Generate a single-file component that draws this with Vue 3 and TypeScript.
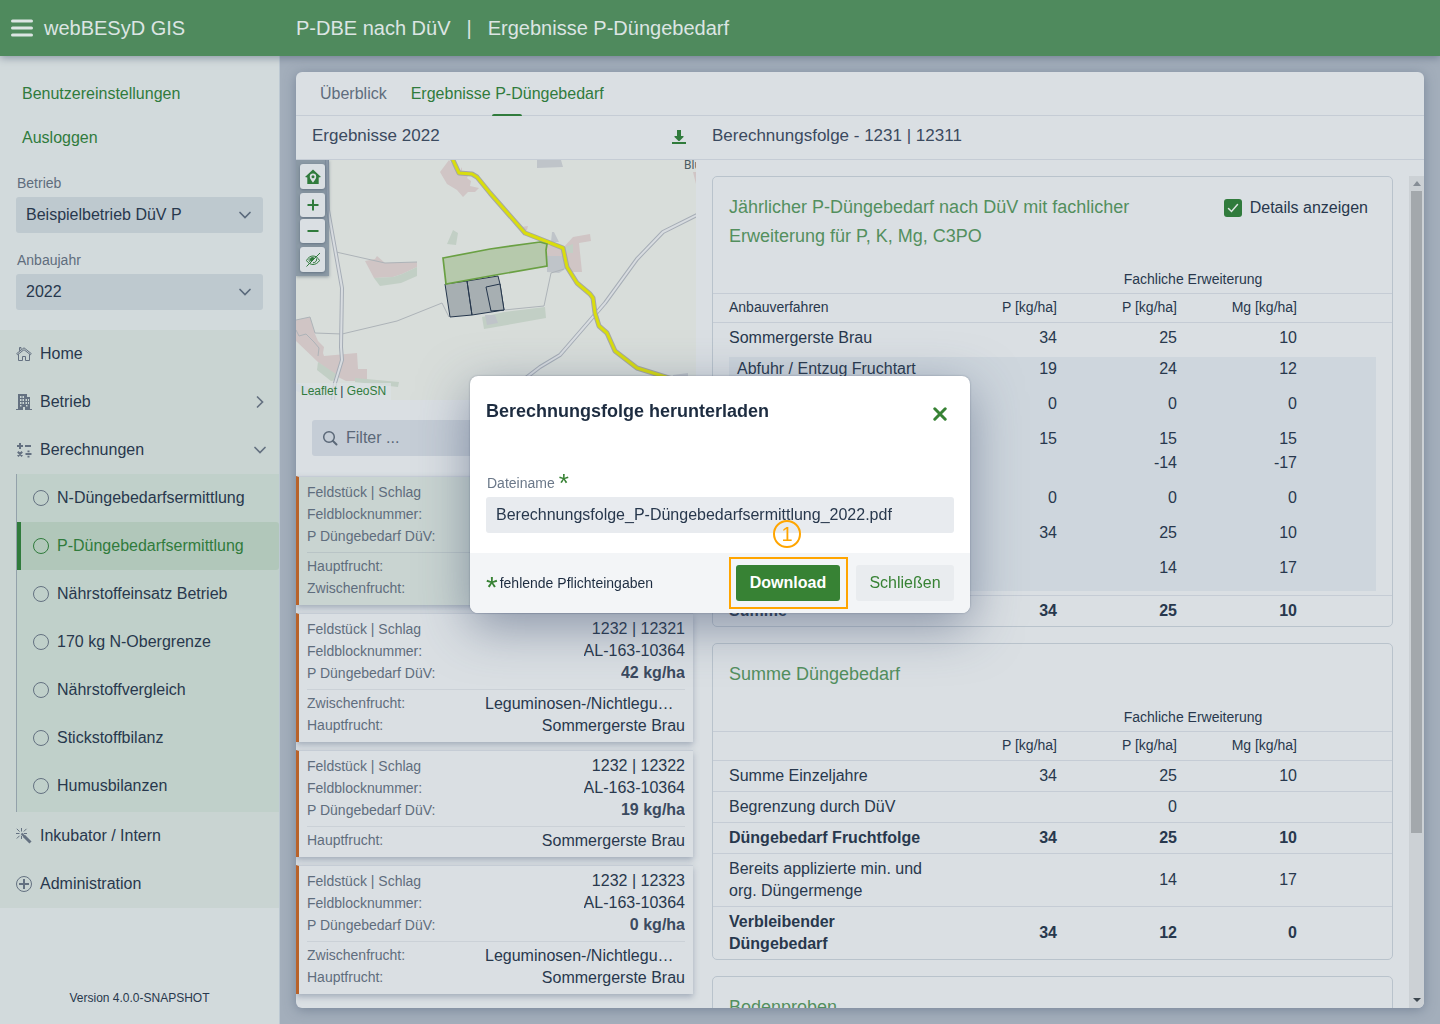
<script setup lang="ts">
import { ref } from 'vue'

interface MenuEntry { label: string; icon: string; chevron?: string }
interface Row { label: string; values: string[]; bold?: boolean }
interface Plot { plot: string; block: string; demand: string; active?: boolean; crops: { label: string; name: string }[] }

const farm = ref('Beispielbetrieb DüV P')
const year = ref('2022')
const showDetails = ref(true)
const filter = ref('')
const fileName = ref('Berechnungsfolge_P-Düngebedarfsermittlung_2022.pdf')

const topMenu: MenuEntry[] = [
  { label: 'Home', icon: 'home' },
  { label: 'Betrieb', icon: 'building', chevron: 'right' },
  { label: 'Berechnungen', icon: 'calc', chevron: 'down' },
]
const subMenu: string[] = [
  'N-Düngebedarfsermittlung',
  'P-Düngebedarfsermittlung',
  'Nährstoffeinsatz Betrieb',
  '170 kg N-Obergrenze',
  'Nährstoffvergleich',
  'Stickstoffbilanz',
  'Humusbilanzen',
]
const activeSub = 'P-Düngebedarfsermittlung'

const legume = { label: 'Zwischenfrucht:', name: 'Leguminosen-/Nichtleguminosen' }
const barley = { label: 'Hauptfrucht:', name: 'Sommergerste Brau' }
const plots: Plot[] = [
  { plot: '', block: '', demand: '', active: true, crops: [{ label: 'Hauptfrucht:', name: '' }, { label: 'Zwischenfrucht:', name: '' }] },
  { plot: '1232 | 12321', block: 'AL-163-10364', demand: '42 kg/ha', crops: [legume, barley] },
  { plot: '1232 | 12322', block: 'AL-163-10364', demand: '19 kg/ha', crops: [barley] },
  { plot: '1232 | 12323', block: 'AL-163-10364', demand: '0 kg/ha', crops: [legume, barley] },
]

const details: (Row & { tight?: boolean })[] = [
  { label: 'Abfuhr / Entzug Fruchtart', values: ['19', '24', '12'] },
  { label: '', values: ['0', '0', '0'] },
  { label: '', values: ['15', '15', '15'], tight: true },
  { label: '', values: ['', '-14', '-17'] },
  { label: '', values: ['0', '0', '0'] },
  { label: '', values: ['34', '25', '10'] },
  { label: '', values: ['', '14', '17'] },
]
const sums: Row[] = [
  { label: 'Summe Einzeljahre', values: ['34', '25', '10'] },
  { label: 'Begrenzung durch DüV', values: ['', '0', ''] },
  { label: 'Düngebedarf Fruchtfolge', values: ['34', '25', '10'], bold: true },
  { label: 'Bereits applizierte min. und org. Düngermenge', values: ['', '14', '17'] },
  { label: 'Verbleibender Düngebedarf', values: ['34', '12', '0'], bold: true },
]
</script>

<template>
  <div class="app">
    <header class="topbar">
      <div class="brand">
        <button class="menu-btn" type="button" aria-label="Menü">
          <svg width="22" height="18" viewBox="0 0 22 18"><path d="M1.5 2h19M1.5 9h19M1.5 16h19" stroke="currentColor" stroke-width="3" stroke-linecap="round" /></svg>
        </button>
        <span>webBESyD GIS</span>
      </div>
      <h1><span>P-DBE nach DüV</span><span>|</span><span>Ergebnisse P-Düngebedarf</span></h1>
    </header>

    <div class="body">
      <aside class="sidebar">
        <nav class="account">
          <a href="#">Benutzereinstellungen</a>
          <a href="#">Ausloggen</a>
        </nav>
        <div class="field">
          <label for="farm">Betrieb</label>
          <div class="select">
            <select id="farm" v-model="farm"><option>Beispielbetrieb DüV P</option></select>
            <svg width="14" height="8" viewBox="0 0 14 8"><path d="M2 1.500 7 6.500l5-5" fill="none" stroke="currentColor" stroke-width="1.700" stroke-linecap="round" /></svg>
          </div>
        </div>
        <div class="field">
          <label for="year">Anbaujahr</label>
          <div class="select">
            <select id="year" v-model="year"><option>2022</option></select>
            <svg width="14" height="8" viewBox="0 0 14 8"><path d="M2 1.500 7 6.500l5-5" fill="none" stroke="currentColor" stroke-width="1.700" stroke-linecap="round" /></svg>
          </div>
        </div>

        <nav class="menu">
          <a v-for="item in topMenu" :key="item.label" href="#" class="item">
            <svg v-if="item.icon === 'home'" width="16" height="16" viewBox="0 0 16 16" fill="none" stroke="currentColor">
              <path d="M.7 7.600 8 1.800l7.300 5.800-.9 1.100L8 3.700 1.600 8.700z" />
              <path d="M3.500 4.800V1.500h1.500v2M2.500 8.200v6.300h4v-4h3v4h4V8.200" />
            </svg>
            <svg v-else-if="item.icon === 'building'" width="16" height="16" viewBox="0 0 16 16">
              <path fill="currentColor" fill-rule="evenodd" d="M2 0h9v3h3v12h2v1H9v-3H7v3H0v-1h2zM4 2v2h1.500V2zM6.500 2v2H8V2zM4 5v2h1.500V5zM6.500 5v2H8V5zM4 8v2h1.500V8zM6.500 8v2H8V8zM9.500 5v2H11V5zM9.500 8v2H11V8zM12 5v2h1V5zM12 8v2h1V8zM4 11v1.500h1.500V11zM10 11v1.500h1.500V11z" />
            </svg>
            <svg v-else width="16" height="16" viewBox="0 0 16 16">
              <path d="M1 4h6M4 1v6M9 4h6M9.500 12h6M1.800 9.800l4.400 4.400M6.200 9.800l-4.400 4.400" stroke="currentColor" stroke-width="2" />
              <path d="M11.500 8.500h2v1.800h-2zM11.500 13.700h2v1.800h-2z" fill="currentColor" />
            </svg>
            <span>{{ item.label }}</span>
            <svg v-if="item.chevron === 'right'" class="chev" width="12" height="14" viewBox="0 0 12 14"><path d="M3.500 2 8.500 7l-5 5" fill="none" stroke="currentColor" stroke-width="1.700" stroke-linecap="round" /></svg>
            <svg v-if="item.chevron === 'down'" class="chev" width="12" height="8" viewBox="0 0 12 8"><path d="M1 1.500l5 5 5-5" fill="none" stroke="currentColor" stroke-width="1.700" stroke-linecap="round" /></svg>
          </a>
          <div class="submenu">
            <a v-for="label in subMenu" :key="label" href="#" :class="['sub', { active: label === activeSub }]">
              <svg width="16" height="16" viewBox="0 0 16 16"><circle cx="8" cy="8" r="7.500" fill="none" stroke="currentColor" /></svg>
              <span>{{ label }}</span>
            </a>
          </div>
          <a href="#" class="item">
            <svg width="16" height="16" viewBox="0 0 16 16" stroke="currentColor">
              <path d="M5.500 0v3.500M0 5.500h3.500M.8.8l2.800 2.800M10.500.8 7.800 3.500M.8 10.500l2.800-2.800M7.800 5.500H11M5.500 7.800V11" />
              <path d="M5.500 5.500 9 9" stroke-width="2" />
              <path d="M8 8l6.500 6.500" stroke-width="3" />
            </svg>
            <span>Inkubator / Intern</span>
          </a>
          <a href="#" class="item">
            <svg width="16" height="16" viewBox="0 0 16 16" fill="none" stroke="currentColor">
              <circle cx="8" cy="8" r="7.500" /><path d="M8 3v10M3 8h10" stroke-width="2" />
            </svg>
            <span>Administration</span>
          </a>
        </nav>
        <p class="version">Version 4.0.0-SNAPSHOT</p>
      </aside>

      <main class="content">
        <section class="panel">
          <nav class="tabs">
            <a href="#">Überblick</a>
            <a href="#" class="selected">Ergebnisse P-Düngebedarf</a>
          </nav>
          <div class="heads">
            <div class="head-left">
              <h2>Ergebnisse 2022</h2>
              <button type="button" aria-label="Herunterladen">
                <svg width="14" height="14" viewBox="0 0 14 14"><path d="M5 0h4v6h2.500v1L7.500 11h-1L2.500 7V6H5zM0 12h14v2H0z" fill="currentColor" /></svg>
              </button>
            </div>
            <h2>Berechnungsfolge - 1231 | 12311</h2>
          </div>

          <div class="columns">
            <div class="left">
              <div class="map">
                <svg class="chart" viewBox="0 0 400 240" preserveAspectRatio="xMinYMin slice">
                  <rect width="400" height="240" fill="#d8ddda" />
                  <g fill="#d0c5c5">
                    <path d="M153 0 163 13l3-6v6h7l-2 5 4 3-1 5 9 2-4 4-7 0-5 5-6-7-10-6-7-12z" />
                    <path d="M69 101l10-2 2-3 8 7 32-1v5l-15 7-9 3-19 1z" />
                    <path d="M0 160l14-3 5 17 3 7 6 6-1 6 1 3 33-3 1 16h9v12H50l-10-5-18-14L0 181z" />
                    <path d="M225 67l7-1-1 4h-6zM251 85l16 3 10-11 17-3 1 7-12 2 3 29h-14l-3-16h-18zM397 12h3v12z" />
                  </g>
                  <g fill="#c2cfc5">
                    <path d="M78 118l19-1 9-3 15-7v9l-16 7-21 3z" />
                    <path d="M157 70l5 3-2 12-9-1zM22 202l18 12 1 6-6 1-14-11zM59 218l44 4-1 5-43-5z" />
                    <path d="M186 157l22-5 41-5 1 11-56 10-6 1zM269 87l8-3v9h-6z" />
                  </g>
                  <g fill="#bfc4c9">
                    <path d="M241 0h24l2 7-26 1zM256 72h2l5 10h-8zM251 96h17l3 12-8 5-12-1z" />
                    <path d="M189 155h10l3 8-11 2zM377 215l15-2v8h-15z" />
                  </g>
                  <path d="M0 223l15 5 27 12H23L0 231z" fill="#c7cfdc" />
                  <path d="M40 92l49 11 32-1M19 173l27 1 55-13 45-18 7 14M208 150l40-4 7-33 13-4M0 160l14-3 5 16M0 170l3 6 7-2 8 8 5 6-1 8" fill="none" stroke="#adb3b8" />
                  <g fill="none" stroke-linejoin="round">
                    <path d="M31 0l1 50 14 78-1 59 1 13-7 23-2 17M401 55l-34 17-26 27-32 44-45 52-20 12-30 23" stroke="#a6adb6" stroke-width="4" />
                    <path d="M31 0l1 50 14 78-1 59 1 13-7 23-2 17M401 55l-34 17-26 27-32 44-45 52-20 12-30 23" stroke="#d8dce0" stroke-width="2" />
                    <path d="M156-2l7 15 13 1 5 3 13 16 35 40 38 15 4 19 10 16 13 11 3 4 2 15 4 13 8 7 8 18 22 17 35 11" stroke="#a5a7a5" stroke-width="5" />
                    <path d="M156-2l7 15 13 1 5 3 13 16 35 40 38 15 4 19 10 16 13 11 3 4 2 15 4 13 8 7 8 18 22 17 35 11" stroke="#d9dd0d" stroke-width="3" />
                  </g>
                  <g fill="#a7afb2" stroke="#25364c" stroke-linejoin="round">
                    <path d="M149 124l22-3 5 34-22 2zM171 121l31-5 2 8 4 26-32 5z" />
                    <path d="M204 124l-14 3 5 24 13-1z" />
                  </g>
                  <path d="M147 98l47-9 50-7 7 2-1 6 1 16-57 10-44 8z" fill="#b6c9ac" stroke="#6aa043" stroke-width="1.700" />
                  <text x="388" y="9" font-size="12" fill="#4b5c62" font-family="Roboto, sans-serif">Blu</text>
                </svg>
                <div class="controls">
                  <button type="button" aria-label="Zum Betrieb">
                    <svg width="16" height="16" viewBox="0 0 16 16"><path fill="currentColor" fill-rule="evenodd" d="M8 .5 16 8l-2.300.5V15H2.300V8.500L0 8zM8 4.500a3.200 3.200 0 0 0-3.200 3.200C4.800 10 8 13.500 8 13.500s3.200-3.500 3.200-5.800A3.200 3.200 0 0 0 8 4.500zm0 1.700a1.500 1.500 0 1 1 0 3 1.500 1.500 0 0 1 0-3z" /></svg>
                  </button>
                  <button type="button" aria-label="Vergrößern"><svg width="12" height="12" viewBox="0 0 12 12"><path d="M6 .5v11M.5 6h11" stroke="currentColor" stroke-width="2" /></svg></button>
                  <button type="button" aria-label="Verkleinern"><svg width="12" height="12" viewBox="0 0 12 12"><path d="M.5 6h11" stroke="currentColor" stroke-width="2" /></svg></button>
                  <button type="button" aria-label="Ausblenden">
                    <svg width="16" height="16" viewBox="0 0 16 16" fill="none" stroke="currentColor">
                      <path d="M1.500 8.500C3 5.500 5.500 4 8 4s5 1.500 6.500 4.500c-1.500 2.500-4 4-6.500 4s-5-1.500-6.500-4zM15 1 1.500 14.500" />
                      <path d="M8 5.200A2.500 2.500 0 0 0 6 9.700L10 6A2.500 2.500 0 0 0 8 5.200z" fill="currentColor" stroke="none" />
                      <path d="M4.500 6.500c-.8 1.300-.5 3 1 4M11.500 6.500c.8 2-1 4.300-3.500 4.300" />
                    </svg>
                  </button>
                </div>
                <p class="attribution"><a href="#">Leaflet</a> | <a href="#">GeoSN</a></p>
              </div>

              <div class="filter">
                <svg width="16" height="16" viewBox="0 0 16 16" fill="none" stroke="currentColor"><circle cx="7" cy="7" r="5.300" stroke-width="1.500" /><path d="M11 11l3.500 3.500" stroke-width="2" stroke-linecap="round" /></svg>
                <input v-model="filter" type="text" placeholder="Filter ..." aria-label="Filter" />
              </div>

              <ul class="plots">
                <li v-for="(p, i) in plots" :key="i" :class="{ active: p.active }">
                  <dl>
                    <div><dt>Feldstück | Schlag</dt><dd>{{ p.plot }}</dd></div>
                    <div><dt>Feldblocknummer:</dt><dd>{{ p.block }}</dd></div>
                    <div><dt>P Düngebedarf DüV:</dt><dd class="strong">{{ p.demand }}</dd></div>
                  </dl>
                  <dl class="crops">
                    <div v-for="c in p.crops" :key="c.label"><dt>{{ c.label }}</dt><dd>{{ c.name }}</dd></div>
                  </dl>
                </li>
              </ul>
            </div>

            <div class="right">
              <div class="scroll">
                <article class="card">
                  <div class="card-head">
                    <h3>Jährlicher P-Düngebedarf nach DüV mit fachlicher Erweiterung für P, K, Mg, C3PO</h3>
                    <label class="check">
                      <span class="box">
                        <input v-model="showDetails" type="checkbox" />
                        <svg width="18" height="18" viewBox="0 0 18 18"><path d="M4.500 9.500l3 3 6-7" fill="none" stroke="#dde5e2" stroke-width="1.500" stroke-linecap="round" /></svg>
                      </span>
                      Details anzeigen
                    </label>
                  </div>
                  <table>
                    <colgroup><col class="c-label" /><col class="c-num" /><col class="c-num" /><col class="c-num" /><col /></colgroup>
                    <thead>
                      <tr class="groups"><td colspan="2"></td><th colspan="2">Fachliche Erweiterung</th><td></td></tr>
                      <tr><th>Anbauverfahren</th><th>P [kg/ha]</th><th>P [kg/ha]</th><th>Mg [kg/ha]</th><td></td></tr>
                    </thead>
                    <tbody>
                      <tr class="lead"><td>Sommergerste Brau</td><td>34</td><td>25</td><td>10</td><td></td></tr>
                    </tbody>
                    <tbody v-if="showDetails" class="details">
                      <tr v-for="(r, i) in details" :key="i" :class="{ tight: r.tight }">
                        <td>{{ r.label }}</td><td v-for="(v, j) in r.values" :key="j">{{ v }}</td><td></td>
                      </tr>
                    </tbody>
                    <tbody>
                      <tr class="gap"><td colspan="5"></td></tr>
                      <tr class="bold"><td>Summe</td><td>34</td><td>25</td><td>10</td><td></td></tr>
                    </tbody>
                  </table>
                </article>

                <article class="card">
                  <div class="card-head"><h3>Summe Düngebedarf</h3></div>
                  <table>
                    <colgroup><col class="c-label" /><col class="c-num" /><col class="c-num" /><col class="c-num" /><col /></colgroup>
                    <thead>
                      <tr class="groups"><td colspan="2"></td><th colspan="2">Fachliche Erweiterung</th><td></td></tr>
                      <tr><td></td><th>P [kg/ha]</th><th>P [kg/ha]</th><th>Mg [kg/ha]</th><td></td></tr>
                    </thead>
                    <tbody>
                      <tr v-for="r in sums" :key="r.label" :class="{ bold: r.bold }">
                        <td>{{ r.label }}</td><td v-for="(v, j) in r.values" :key="j">{{ v }}</td><td></td>
                      </tr>
                    </tbody>
                  </table>
                </article>

                <article class="card">
                  <div class="card-head"><h3>Bodenproben</h3></div>
                </article>
              </div>
              <div class="scrollbar" aria-hidden="true">
                <svg width="15" height="15" viewBox="0 0 15 15"><path d="M4 10h8L8 5z" fill="#868e96" /></svg>
                <div class="track"><div class="thumb"></div></div>
                <svg width="15" height="15" viewBox="0 0 15 15"><path d="M4 5h8l-4 4z" fill="#3d474f" /></svg>
              </div>
            </div>
          </div>
        </section>
      </main>
    </div>

    <div class="overlay">
      <form class="dialog" role="dialog" aria-labelledby="dlg-title" @submit.prevent>
        <div class="dialog-head">
          <h2 id="dlg-title">Berechnungsfolge herunterladen</h2>
          <button type="button" aria-label="Dialog schließen">
            <svg width="14" height="14" viewBox="0 0 14 14"><path d="M1.800 1.800l10.400 10.400M12.200 1.800 1.800 12.200" stroke="currentColor" stroke-width="3" stroke-linecap="round" /></svg>
          </button>
        </div>
        <div class="dialog-body">
          <label for="file">Dateiname <span class="star">*</span></label>
          <input id="file" v-model="fileName" type="text" required />
        </div>
        <div class="dialog-foot">
          <p><span class="star">*</span>fehlende Pflichteingaben</p>
          <div class="marked">
            <button type="submit" class="primary">Download</button>
            <span class="frame"></span>
            <span class="step">1</span>
          </div>
          <button type="button" class="secondary">Schließen</button>
        </div>
      </form>
    </div>
  </div>
</template>

<style>
body { margin: 0; }
</style>

<style scoped>
* { box-sizing: border-box; }
.app {
  --green: #307b3c;
  --text: #28384d;
  --muted: #5f6d7d;
  --line: #c5ccd5;
  height: 100vh;
  display: flex;
  flex-direction: column;
  overflow: hidden;
  font: 16px/22px "Liberation Sans", Arial, sans-serif;
  color: var(--text);
  background: #a3aebb;
}
h1, h2, h3, p, ul, dl, dd { margin: 0; padding: 0; font-weight: 400; list-style: none; }
a { color: var(--green); text-decoration: none; }
button { border: 0; padding: 0; background: none; font: inherit; color: var(--green); display: flex; align-items: center; justify-content: center; cursor: pointer; }
svg { flex: none; display: block; }

.topbar { flex: none; height: 56px; display: flex; align-items: center; background: #4f8a5d; color: #dce5e3; font-size: 20px; z-index: 2; box-shadow: 0 2px 8px rgba(70, 85, 110, .5); }
.brand { width: 296px; padding-left: 11px; display: flex; align-items: center; gap: 11px; }
.menu-btn { color: inherit; }
h1 { display: flex; gap: 16px; font-size: 20px; }

.body { flex: 1; display: flex; min-height: 0; }
.sidebar { flex: none; width: 280px; padding-top: 16px; display: flex; flex-direction: column; background: #d2dadc; border-right: 1px solid #bcc8d2; }
.account { display: flex; flex-direction: column; padding: 0 22px; margin-bottom: 12px; }
.account a { line-height: 44px; }
.field { padding: 0 16px; margin-bottom: 16px; }
.field label { display: block; padding: 1px 1px 4px; font-size: 14px; line-height: 20px; color: var(--muted); }
.field + .field { margin-bottom: 20px; }
.select { display: grid; align-items: center; background: #bec9cf; border-radius: 3px; }
.select > * { grid-area: 1 / 1; }
.select svg { justify-self: end; margin-right: 11px; color: #5b6a7c; pointer-events: none; }
select { appearance: none; width: 100%; height: 36px; padding: 0 10px; border: 0; background: none; font: inherit; color: inherit; }

.menu { background: #c9d4d2; }
.item, .sub { display: flex; align-items: center; gap: 8px; height: 48px; color: var(--text); }
.item { padding: 0 13px 0 16px; }
.item svg, .sub svg { color: #647181; }
.chev { margin-left: auto; }
.submenu { margin-left: 16px; border-left: 1px solid #93a1aa; background: #c0d0ca; padding-bottom: 2px; }
.sub { padding-left: 16px; }
.sub.active { padding-left: 12px; border-left: 4px solid var(--green); border-radius: 0 3px 3px 0; background: #b1c7ba; color: var(--green); }
.sub.active svg { color: var(--green); }
.version { margin-top: auto; padding-bottom: 16px; text-align: center; font-size: 12px; line-height: 20px; }

.content { flex: 1; min-width: 0; padding: 16px; }
.panel { height: 100%; display: flex; flex-direction: column; background: #dadfe3; border-radius: 6px; overflow: hidden; box-shadow: 0 2px 12px rgba(80, 95, 120, .5); }
.tabs { flex: none; display: flex; gap: 24px; height: 44px; padding: 0 24px; border-bottom: 1px solid var(--line); }
.tabs a { position: relative; line-height: 43px; color: var(--muted); }
.tabs .selected { color: var(--green); }
.tabs .selected::after { content: ""; position: absolute; left: 50%; bottom: -1px; width: 30px; margin-left: -15px; height: 2px; border-radius: 2px 2px 0 0; background: var(--green); }
.heads { flex: none; display: flex; align-items: center; height: 44px; padding-bottom: 4px; border-bottom: 1px solid var(--line); }
.heads h2 { font-size: 17px; color: #3b4a5f; }
.head-left { width: 416px; padding: 0 26px 0 16px; display: flex; align-items: center; justify-content: space-between; }
.head-left button { padding: 3px 0 0; }
.columns { flex: 1; display: flex; min-height: 0; }

.left { flex: none; width: 400px; display: flex; flex-direction: column; }
.map { position: relative; height: 240px; overflow: hidden; }
.chart { width: 100%; height: 100%; }
.controls { position: absolute; left: 0; top: 0; width: 33px; padding: 4px; background: rgba(110, 126, 144, .72); box-shadow: 0 1px 3px rgba(80, 95, 110, .5); }
.controls button { width: 25px; height: 25px; border-radius: 3px; background: #dadfe3; box-shadow: 0 1px 3px rgba(60, 75, 95, .5); }
.controls button:nth-child(2), .controls button:nth-child(3) { height: 24px; }
.controls button:nth-child(2) { margin: 4px 0 2px; }
.controls button:nth-child(3) { margin-bottom: 4px; }
.attribution { position: absolute; left: 0; bottom: 0; padding: 0 5px; font-size: 12px; line-height: 17px; background: rgba(220, 225, 228, .7); }
.filter { flex: none; display: flex; align-items: center; gap: 8px; height: 36px; margin: 20px 16px; padding: 0 10px; border-radius: 3px; background: #c5cdd6; color: #5b6878; }
.filter input { flex: 1; min-width: 0; height: 100%; padding: 0; border: 0; background: none; font: inherit; color: inherit; }
.filter input::placeholder { color: inherit; opacity: 1; }
.plots { flex: 1; display: flex; flex-direction: column; gap: 8px; padding-right: 3px; }
.plots li { padding: 4px 8px 6px; border-left: 3px solid #b8622a; border-top: 1px solid var(--line); background: #dadfe3; box-shadow: 0 3px 6px rgba(100, 115, 140, .45); }
.plots li.active { background: #c9d4d1; }
.plots dl > div { display: flex; justify-content: space-between; height: 22px; }
.plots dt { font-size: 14px; color: var(--muted); }
.plots dd { max-width: 200px; overflow: hidden; text-overflow: ellipsis; white-space: nowrap; }
.plots .strong { font-weight: 700; color: #3b4a5f; }
.plots .crops { margin-top: 5px; padding-top: 2px; border-top: 1px solid #cbd1d7; }
.plots .active .crops { border-color: #b9c4c6; }
.plots .crops dd { line-height: 24px; }

.right { flex: 1; min-width: 0; display: flex; padding: 16px 0 0 16px; }
.scroll { flex: 1; min-width: 0; display: flex; flex-direction: column; gap: 16px; padding-right: 16px; overflow: hidden; }
.card { flex: none; border: 1px solid #b9c3cc; border-radius: 5px; }
.card-head { display: flex; justify-content: space-between; align-items: flex-start; padding: 16px 24px 14px 16px; }
h3 { max-width: 440px; font-size: 18px; line-height: 29px; color: #538f5e; }
.check { display: flex; align-items: center; gap: 8px; padding-top: 4px; }
.box { display: grid; }
.box > * { grid-area: 1 / 1; }
.box input { appearance: none; width: 18px; height: 18px; margin: 0; border-radius: 3px; background: #b9c3cc; }
.box input:checked { background: var(--green); }
.box input:not(:checked) + svg { visibility: hidden; }
.box svg { pointer-events: none; z-index: 1; }

table { width: 100%; table-layout: fixed; border-collapse: separate; border-spacing: 0; }
.c-label { width: 240px; }
.c-num { width: 120px; }
td, th { padding: 4px 16px 4px 0; text-align: right; font-weight: 400; border-bottom: 1px solid var(--line); }
td:first-child, th:first-child { padding-left: 16px; text-align: left; }
thead td, thead th { height: 29px; padding-top: 2px; padding-bottom: 4px; font-size: 14px; }
thead .groups th { padding: 3px 0; text-align: center; }
tbody:last-child tr:last-child td { border-bottom: 0; }
.bold td { font-weight: 700; }
.lead td { padding-bottom: 8px; border-bottom: 0; }
.details td { height: 35px; padding-top: 0; padding-bottom: 11px; line-height: 24px; border-bottom: 0; background: #ced6dd; background-clip: padding-box; }
.details .tight td { height: 24px; padding-bottom: 0; }
.details td:first-child { border-left: 16px solid transparent; padding-left: 8px; }
.details td:last-child { border-right: 16px solid transparent; }
.gap td { height: 5px; padding: 0; }

.scrollbar { flex: none; width: 15px; display: flex; flex-direction: column; background: #ccd1d5; }
.track { flex: 1; padding: 0 2px; }
.thumb { height: 80%; background: #a3a8ac; }

.overlay { position: fixed; inset: 0; z-index: 10; display: flex; align-items: center; justify-content: center; padding-bottom: 35px; }
.dialog { width: 500px; border-radius: 8px; background: #fff; color: #1d2c40; box-shadow: 0 0 2px rgba(40, 55, 80, .4), 0 14px 50px rgba(60, 75, 110, .5); --green: #378234; }
.dialog-head { display: flex; justify-content: space-between; align-items: flex-start; padding: 24px 23px 0 16px; }
.dialog-head h2 { font-size: 18px; font-weight: 700; }
.dialog-head button { margin-top: 7px; }
.dialog-body { padding: 50px 16px 20px; }
.dialog-body label { display: flex; gap: 4px; padding: 0 1px; height: 25px; font-size: 14px; color: #6b7889; }
.dialog-body input { width: 100%; height: 36px; padding: 0 10px; border: 0; border-radius: 3px; background: #e8ebef; font: inherit; color: #28384d; }
.star { color: var(--green); font-size: 26px; line-height: 22px; }
.dialog-foot { display: flex; align-items: center; gap: 16px; height: 60px; padding: 0 16px; border-radius: 0 0 8px 8px; background: #f3f5f7; }
.dialog-foot p { flex: 1; display: flex; align-items: center; font-size: 14px; }
.dialog-foot .star { font-size: 30px; padding-top: 8px; margin-right: 2px; }
.dialog-foot button { height: 36px; border-radius: 3px; }
.primary { width: 104px; background: var(--green); color: #fff; font-weight: 700; }
.secondary { width: 98px; background: #e9ecef; }
.marked { position: relative; }
.frame { position: absolute; inset: -8px -8px -8px -7px; border: 2px solid #ffa500; pointer-events: none; }
.step { position: absolute; left: 37px; top: -45px; width: 28px; height: 28px; border: 2px solid #ffa500; border-radius: 50%; color: #ffa500; font-size: 20px; line-height: 24px; text-align: center; pointer-events: none; }
</style>
